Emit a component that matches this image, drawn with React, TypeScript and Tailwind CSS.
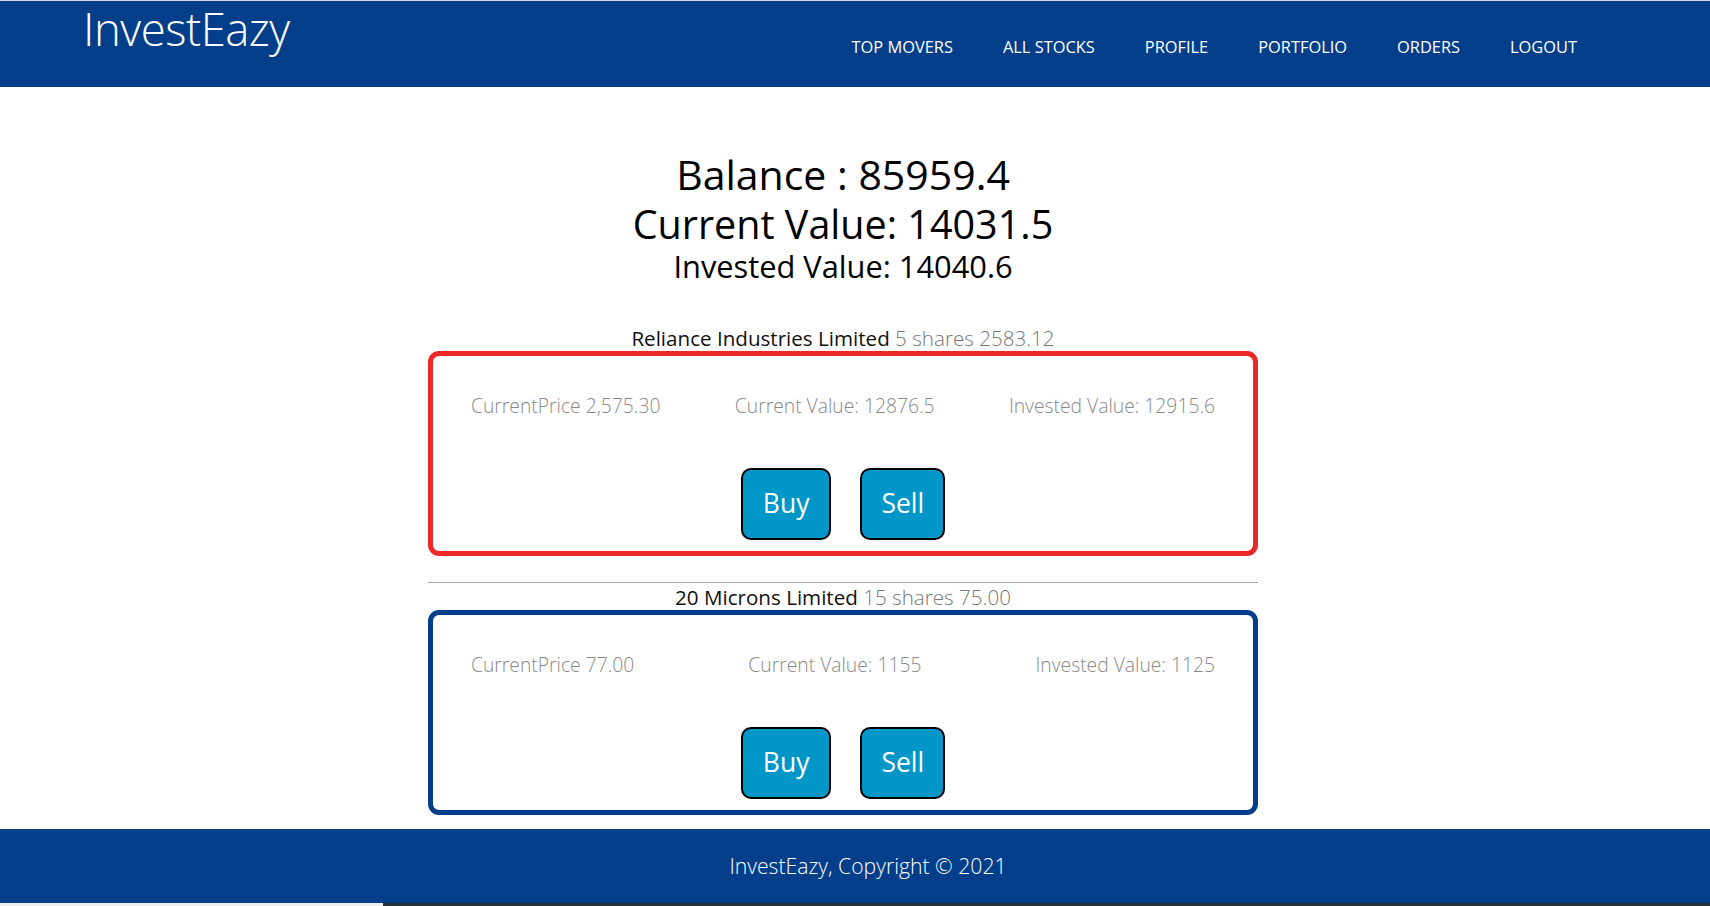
const navItems = ['TOP MOVERS', 'ALL STOCKS', 'PROFILE', 'PORTFOLIO', 'ORDERS', 'LOGOUT'];

type Holding = {
  name: string;
  shares: number;
  avg: string;
  price: string;
  current: string;
  invested: string;
  profit: boolean;
};

const holdings: Holding[] = [
  {
    name: 'Reliance Industries Limited',
    shares: 5,
    avg: '2583.12',
    price: '2,575.30',
    current: '12876.5',
    invested: '12915.6',
    profit: false,
  },
  {
    name: '20 Microns Limited',
    shares: 15,
    avg: '75.00',
    price: '77.00',
    current: '1155',
    invested: '1125',
    profit: true,
  },
];

const font = { fontFamily: '"Open Sans", "Noto Sans", sans-serif' };

const Header = () => (
  <header className="flex h-[87px] items-start justify-between border-t border-[#d4d4d4] bg-[#023e8a] pl-[83px] pr-[133px] text-white">
    <a className="text-[45.5px] font-light leading-[54px] tracking-[-0.5px]">InvestEazy</a>
    <nav className="flex gap-[50px] pt-[35px]">
      {navItems.map((item) => (
        <a key={item} className="text-[16.4px] font-medium leading-[22px]">
          {item}
        </a>
      ))}
    </nav>
  </header>
);

const StockCard = ({ h }: { h: Holding }) => (
  <div>
    <p className="text-center text-[20.6px] leading-[26px] text-[#111]">
      {h.name}{' '}
      <span className="font-light text-[#777]">
        {h.shares} shares {h.avg}
      </span>
    </p>
    <div
      className={`rounded-[11px] border-[5px] px-[38px] pb-[11px] pt-[38px] ${
        h.profit ? 'border-[#023e8a]' : 'border-[#ec2828]'
      }`}
    >
      <div className="flex justify-between text-[19.3px] font-light leading-[24px] text-[#8a8a8a]">
        <span>CurrentPrice {h.price}</span>
        <span>Current Value: {h.current}</span>
        <span>Invested Value: {h.invested}</span>
      </div>
      <div className="mt-[50px] flex justify-center gap-[29px]">
        <button className="h-[72px] rounded-[10px] border-2 border-black bg-[#0096c7] px-[20px] text-[26.5px] text-white">
          Buy
        </button>
        <button className="h-[72px] rounded-[10px] border-2 border-black bg-[#0096c7] px-[19px] text-[26.5px] text-white">
          Sell
        </button>
      </div>
    </div>
  </div>
);

export default function App() {
  return (
    <div className="flex min-h-[906px] flex-col bg-white" style={font}>
      <Header />
      <main className="ml-[428px] w-[830px] pt-[63px]">
        <div className="text-center text-black">
          <h2 className="text-[41px] leading-[48px]">Balance : 85959.4</h2>
          <h2 className="text-[39.5px] leading-[52px]">Current Value: 14031.5</h2>
          <h3 className="text-[30.8px] leading-[32px]">Invested Value: 14040.6</h3>
        </div>
        <div className="mt-[43px]">
          <StockCard h={holdings[0]} />
          <hr className="mb-[1px] mt-[26px] border-t border-[#a6a6a6]" />
          <StockCard h={holdings[1]} />
        </div>
      </main>
      <footer className="mt-[14px] flex h-[74px] items-center justify-center bg-[#023e8a] pl-[26px] text-[21.2px] font-light text-white">
        InvestEazy, Copyright © 2021
      </footer>
      <div className="flex h-[3px]">
        <div className="w-[383px] bg-[#efefef]" />
        <div className="flex-1 bg-[#263238]" />
      </div>
    </div>
  );
}
